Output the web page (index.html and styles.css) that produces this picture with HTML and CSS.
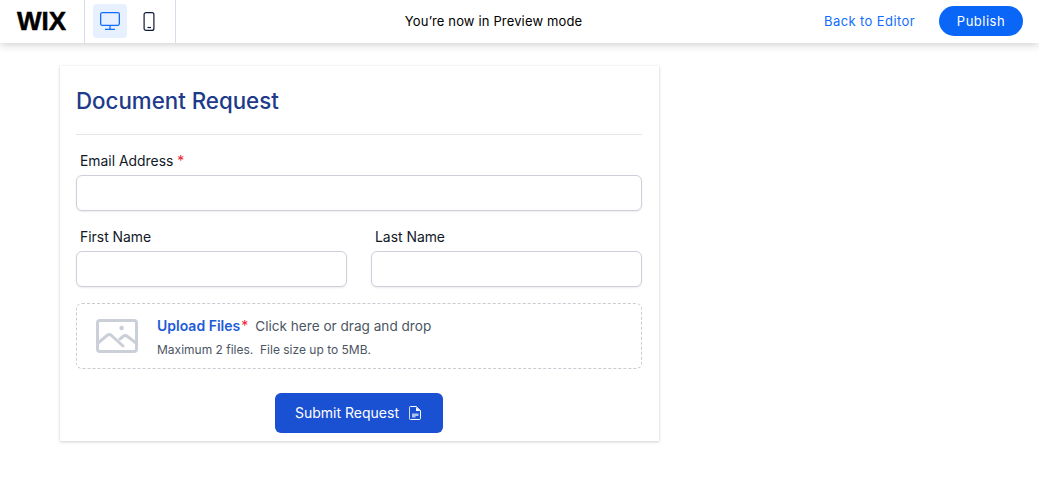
FILE: index.html
```html
<!DOCTYPE html>
<html lang="en">
<head>
<meta charset="utf-8">
<title>Document Request</title>
<link rel="stylesheet" href="styles.css">
</head>
<body>
<header class="topbar">
  <div class="logo-cell"><span class="logo">WIX</span></div>
  <div class="devices">
    <span class="device device-active">
      <svg width="20" height="18" viewBox="0 0 20 18" fill="none" stroke="#116dff" stroke-width="1.300"><rect x="0.650" y="0.650" width="18.700" height="12.700" rx="1.500"/><path d="M10 13.500v4M5 17.350h10"/></svg>
    </span>
    <span class="device">
      <svg width="12" height="19" viewBox="0 0 12 19" fill="none" stroke="#0d1a3a" stroke-width="1.200"><rect x="1.100" y="0.600" width="9.800" height="17.800" rx="2"/><path d="M4.500 15.500h3.500"/></svg>
    </span>
  </div>
  <div class="notice">You’re now in Preview mode</div>
  <div class="actions">
    <a class="back" href="#">Back to Editor</a>
    <button class="publish" type="button">Publish</button>
  </div>
</header>
<main class="page">
  <form class="card">
    <h1 class="title">Document Request</h1>
    <div class="field">
      <label class="label">Email Address <span class="req">*</span></label>
      <div class="input"></div>
    </div>
    <div class="row">
      <div class="field"><label class="label">First Name</label><div class="input"></div></div>
      <div class="field"><label class="label">Last Name</label><div class="input"></div></div>
    </div>
    <div class="upload">
      <svg class="upload-icon" width="42" height="34" viewBox="0 0 42 34" fill="none" stroke="#cbd0d8" stroke-width="3" stroke-linejoin="round" stroke-linecap="round"><rect x="1.500" y="1.500" width="39" height="31" rx="2.500"/><path d="M2 24l9-7.500c1.500-1.300 3-1.300 4.500 0L27 27M24 20l3-2.500c1.500-1.300 3-1.300 4.500 0L40 24"/><circle cx="25.600" cy="9" r="2.300" fill="#cbd0d8" stroke="none"/></svg>
      <div class="upload-text">
        <p class="upload-line"><span class="upload-link">Upload Files</span><span class="req upload-req">*</span><span class="upload-hint">Click here or drag and drop</span></p>
        <p class="upload-note">Maximum 2 files.&nbsp; File size up to 5MB.</p>
      </div>
    </div>
    <div class="submit-row">
      <button class="submit" type="button">Submit Request
        <svg width="12" height="14" viewBox="0 0 12 14" fill="none"><path d="M1.500 0.500h5.800l4.200 4.200v7.600c0 .7-.5 1.200-1.200 1.200h-8.800c-.7 0-1.200-.5-1.200-1.200V1.700c0-.7.500-1.200 1.200-1.200z" stroke="#fff" stroke-width="1"/><path d="M7 1v4h4.500z" fill="#fff"/><path d="M3 7.500h6.500v2.500H6.500v1.500H3z" fill="#fff" opacity=".65"/></svg>
      </button>
    </div>
  </form>
</main>
</body>
</html>
```
FILE: styles.css
```css
* { box-sizing: border-box; }
html, body { margin: 0; height: 100%; }
body { background: #fff; font-family: Inter, "Liberation Sans", sans-serif; color: #111827; overflow: hidden; }
.topbar { height: 43px; display: flex; align-items: stretch; background: #fff; box-shadow: 0 2px 8px rgba(0,0,0,.18); position: relative; }
.logo-cell { width: 85px; border-right: 1px solid #d6dde8; display: flex; align-items: center; justify-content: center; padding-right: 1px; }
.logo { font-family: "Liberation Sans", sans-serif; font-weight: 700; font-size: 26px; color: #000; -webkit-text-stroke: 0.5px #000; }
.devices { width: 91px; border-right: 1px solid #d6dde8; display: flex; align-items: flex-start; padding: 4px 8px 0; gap: 5px; }
.device { width: 34px; height: 34px; border-radius: 4px; display: flex; align-items: center; justify-content: center; }
.device-active { background: #e7f0ff; }
.notice { flex: 1; display: flex; align-items: center; justify-content: center; font-size: 13px; letter-spacing: .15px; color: #000; padding: 0 13px 2px 0; }
.actions { display: flex; align-items: center; gap: 24px; padding: 0 16px 1px 0; }
.back { color: #116dff; font-size: 13px; letter-spacing: .4px; text-decoration: none; }
.publish { width: 84px; height: 30px; border: 0; border-radius: 15px; background: #0a66f7; color: #fff; font: 13px Inter, sans-serif; letter-spacing: .5px; padding: 0; }
.page { padding: 23px 0 0 60px; }
.card { width: 599px; height: 375px; padding: 16px 17px 0 16px; background: #fff; box-shadow: 0 1px 3px rgba(0,0,0,.18), 0 0 1px rgba(0,0,0,.1); }
.title { margin: 0; height: 53px; padding-top: 3px; font-size: 22.300px; line-height: 32px; font-weight: 500; color: #1e3a8a; border-bottom: 1px solid #e5e7eb; }
.field { display: flex; flex-direction: column; flex: 1; }
.label { padding: 18px 0 6px 4px; font-size: 13.900px; line-height: 16px; font-weight: 400; color: #111827; }
.req { color: #ef1c2e; }
.input { height: 36px; border: 1px solid #cdd0da; border-radius: 6px; background: #fff; box-shadow: 0 1px 2px rgba(0,0,0,.08); }
.row { display: flex; gap: 24px; }
.upload { margin-top: 16px; height: 66px; display: flex; align-items: center; gap: 19px; padding-left: 19px; border: 1px dashed #c9ccd2; border-radius: 6px; }
.upload-text { display: flex; flex-direction: column; gap: 6px; padding-top: 1px; }
.upload-line, .upload-note { margin: 0; }
.upload-line { font-size: 14px; line-height: 20px; }
.upload-link { color: #1d5bd8; font-weight: 600; font-size: 14px; }
.upload-req { margin-left: 1px; }
.upload-hint { color: #4b5563; font-size: 13.600px; margin-left: 7px; }
.upload-note { color: #4b5563; font-size: 12px; line-height: 16px; }
.submit-row { display: flex; justify-content: center; margin-top: 24px; }
.submit { width: 168px; height: 40px; border: 0; border-radius: 6px; background: #1a50d2; color: #fff; font: 400 14px Inter, sans-serif; display: flex; align-items: center; justify-content: center; gap: 10px; padding: 0 2px 1px 0; }
```
